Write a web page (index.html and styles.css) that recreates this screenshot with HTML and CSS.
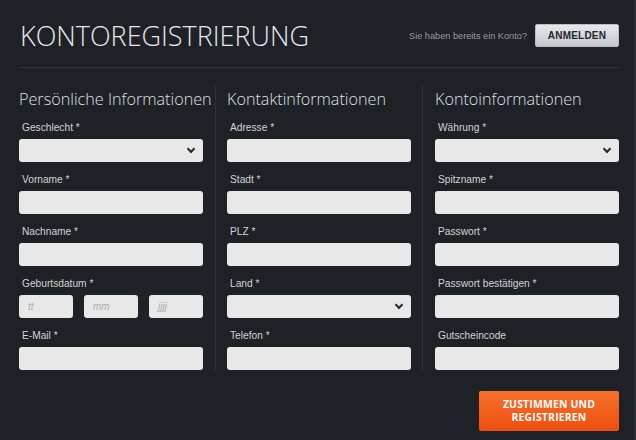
FILE: index.html
```html
<!DOCTYPE html>
<html lang="de">
<head>
<meta charset="utf-8">
<title>Kontoregistrierung</title>
<link rel="stylesheet" href="styles.css">
</head>
<body>
<div class="page">
  <header class="header">
    <h1 class="title">KONTOREGISTRIERUNG</h1>
    <div class="login">
      <span class="login-text">Sie haben bereits ein Konto?</span>
      <button class="btn-login">ANMELDEN</button>
    </div>
  </header>

  <main class="columns">
    <section class="col col-first">
      <h2 class="col-title">Persönliche Informationen</h2>
      <div class="field">
        <label class="label">Geschlecht *</label>
        <div class="input select"><span class="chev"></span></div>
      </div>
      <div class="field">
        <label class="label">Vorname *</label>
        <div class="input"></div>
      </div>
      <div class="field">
        <label class="label">Nachname *</label>
        <div class="input"></div>
      </div>
      <div class="field">
        <label class="label">Geburtsdatum *</label>
        <div class="date-row">
          <div class="input date"><span class="ph">tt</span></div>
          <div class="input date"><span class="ph">mm</span></div>
          <div class="input date"><span class="ph">jjjj</span></div>
        </div>
      </div>
      <div class="field">
        <label class="label">E-Mail *</label>
        <div class="input"></div>
      </div>
    </section>

    <section class="col col-mid">
      <h2 class="col-title">Kontaktinformationen</h2>
      <div class="field">
        <label class="label">Adresse *</label>
        <div class="input"></div>
      </div>
      <div class="field">
        <label class="label">Stadt *</label>
        <div class="input"></div>
      </div>
      <div class="field">
        <label class="label">PLZ *</label>
        <div class="input"></div>
      </div>
      <div class="field">
        <label class="label">Land *</label>
        <div class="input select"><span class="chev"></span></div>
      </div>
      <div class="field">
        <label class="label">Telefon *</label>
        <div class="input"></div>
      </div>
    </section>

    <section class="col col-last">
      <h2 class="col-title">Kontoinformationen</h2>
      <div class="field">
        <label class="label">Währung *</label>
        <div class="input select"><span class="chev"></span></div>
      </div>
      <div class="field">
        <label class="label">Spitzname *</label>
        <div class="input"></div>
      </div>
      <div class="field">
        <label class="label">Passwort *</label>
        <div class="input"></div>
      </div>
      <div class="field">
        <label class="label">Passwort bestätigen *</label>
        <div class="input"></div>
      </div>
      <div class="field">
        <label class="label">Gutscheincode</label>
        <div class="input"></div>
      </div>
    </section>
  </main>

  <footer class="footer">
    <button class="btn-register">ZUSTIMMEN UND<br>REGISTRIEREN</button>
  </footer>
</div>
</body>
</html>
```

FILE: styles.css
```css
* { box-sizing: border-box; }

html, body {
  margin: 0;
  padding: 0;
  background: #1e2125;
  height: 100%;
}

.page {
  padding: 0 15px 0 19px;
  height: 440px;
  border-right: 2px solid #2b2f34;
}

.header {
  height: 68px;
  margin-left: 1px;
  border-bottom: 1px solid #33373c;
  display: flex;
  align-items: flex-start;
  justify-content: space-between;
}

.title {
  margin: 18px 0 0 0;
  font-family: "Open Sans", sans-serif;
  font-weight: 300;
  font-size: 27px;
  line-height: 36px;
  color: #e6e8ea;
  letter-spacing: 0;
}

.login {
  display: flex;
  align-items: center;
  margin-top: 24px;
  gap: 8px;
}

.login-text {
  font-family: "Liberation Sans", Arial, sans-serif;
  font-size: 9.2px;
  color: #9a9da1;
}

.btn-login {
  width: 84px;
  height: 23px;
  border: 1px solid #b9bcc1;
  border-radius: 2px;
  background: linear-gradient(#e6e8eb, #c5c8cd);
  font-family: "Liberation Sans", Arial, sans-serif;
  font-weight: bold;
  font-size: 10px;
  color: #23262a;
  padding: 0;
  letter-spacing: 0.2px;
}

.columns {
  display: flex;
  margin-top: 17px;
}

.col {
  width: 184px;
  box-sizing: content-box;
  padding-bottom: 1px;
}

.col-first {
  padding-right: 12px;
  border-right: 1px solid #2e3236;
}

.col-mid {
  padding-left: 11px;
  padding-right: 11px;
  border-right: 1px solid #2e3236;
}

.col-last {
  padding-left: 12px;
}

.col-title {
  margin: 2px 0 9px 0;
  font-family: "Open Sans", sans-serif;
  font-weight: 300;
  font-size: 16.2px;
  line-height: 24px;
  color: #dfe1e3;
  white-space: nowrap;
}

.field {
  margin-bottom: 10px;
}

.field:last-child {
  margin-bottom: 0;
}

.label {
  display: block;
  height: 16px;
  line-height: 16px;
  margin: 0 0 3px 3px;
  font-family: "Liberation Sans", Arial, sans-serif;
  font-size: 10.2px;
  color: #d2d4d6;
}

.input {
  height: 23px;
  background: #e8e8e8;
  border-radius: 3px;
  position: relative;
}

.select .chev {
  position: absolute;
  right: 9px;
  top: 7px;
  width: 6px;
  height: 6px;
  border-right: 2px solid #2a2c30;
  border-bottom: 2px solid #2a2c30;
  transform: rotate(45deg);
}

.date-row {
  display: flex;
  gap: 11px;
}

.date {
  width: 54px;
  display: flex;
  align-items: center;
  padding-left: 9px;
}

.ph {
  font-family: "Liberation Sans", Arial, sans-serif;
  font-style: italic;
  font-size: 10px;
  color: #a9abae;
}

.footer {
  display: flex;
  justify-content: flex-end;
  margin-top: 20px;
}

.btn-register {
  width: 140px;
  height: 40px;
  border: none;
  border-radius: 2px;
  background: linear-gradient(#f7712c, #ee4e0f);
  color: #ffffff;
  font-family: "Open Sans", sans-serif;
  font-weight: bold;
  font-size: 10.4px;
  line-height: 13px;
  padding: 0;
  letter-spacing: 0.2px;
}
```
